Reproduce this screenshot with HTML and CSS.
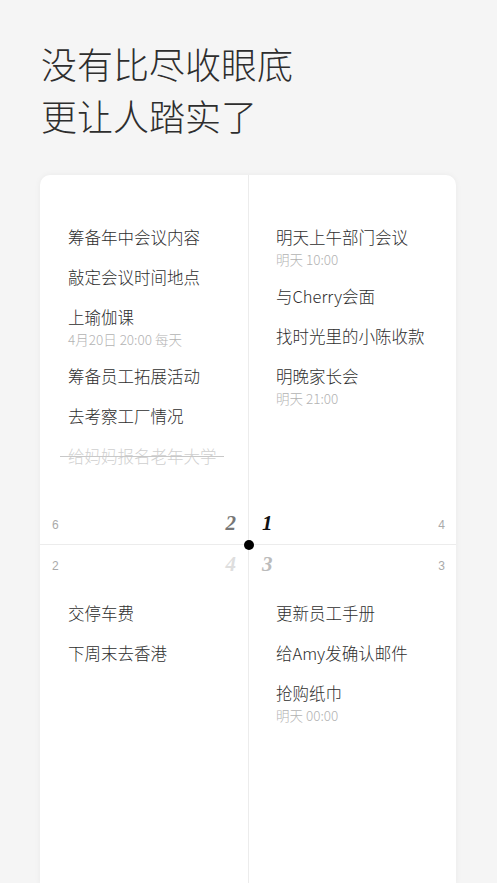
FILE: index.html
```html
<!DOCTYPE html>
<html lang="zh-CN">
<head>
<meta charset="utf-8">
<title>四象限</title>
<link rel="stylesheet" href="styles.css">
</head>
<body>
<header class="head">
  <h1 class="title">没有比尽收眼底<br>更让人踏实了</h1>
</header>
<section class="card">
  <div class="q q-top q-left">
    <ul class="items">
      <li class="item"><span class="name">筹备年中会议内容</span></li>
      <li class="item"><span class="name">敲定会议时间地点</span></li>
      <li class="item has-sub"><span class="name">上瑜伽课</span><span class="sub">4月20日 20:00 每天</span></li>
      <li class="item"><span class="name">筹备员工拓展活动</span></li>
      <li class="item"><span class="name">去考察工厂情况</span></li>
      <li class="item done"><span class="name">给妈妈报名老年大学</span></li>
    </ul>
    <div class="nums">
      <span class="count">6</span>
      <span class="big big-2">2</span>
    </div>
  </div>
  <div class="q q-top q-right">
    <ul class="items">
      <li class="item has-sub"><span class="name">明天上午部门会议</span><span class="sub">明天 10:00</span></li>
      <li class="item"><span class="name">与Cherry会面</span></li>
      <li class="item"><span class="name">找时光里的小陈收款</span></li>
      <li class="item has-sub"><span class="name">明晚家长会</span><span class="sub">明天 21:00</span></li>
    </ul>
    <div class="nums">
      <span class="big big-1">1</span>
      <span class="count">4</span>
    </div>
  </div>
  <div class="q q-bottom q-left">
    <div class="nums">
      <span class="count">2</span>
      <span class="big big-4">4</span>
    </div>
    <ul class="items">
      <li class="item"><span class="name">交停车费</span></li>
      <li class="item"><span class="name">下周末去香港</span></li>
    </ul>
  </div>
  <div class="q q-bottom q-right">
    <div class="nums">
      <span class="big big-3">3</span>
      <span class="count">3</span>
    </div>
    <ul class="items">
      <li class="item"><span class="name">更新员工手册</span></li>
      <li class="item"><span class="name">给Amy发确认邮件</span></li>
      <li class="item has-sub"><span class="name">抢购纸巾</span><span class="sub">明天 00:00</span></li>
    </ul>
  </div>
  <span class="dot"></span>
</section>
</body>
</html>
```

FILE: styles.css
```css
* { box-sizing: border-box; }
html, body { margin: 0; padding: 0; }
body {
  background: #f5f5f5;
  font-family: "Noto Sans CJK SC", "Noto Sans", sans-serif;
  color: #333;
  width: 497px;
  height: 883px;
  overflow: hidden;
}
.head { padding: 37px 0 0 41px; margin-bottom: 34px; }
.title {
  margin: 0;
  font-size: 36px;
  line-height: 52px;
  font-weight: 300;
  color: #2e2e2e;
  letter-spacing: 0;
}
.card {
  position: relative;
  margin: 0 41px 0 40px;
  background: #fff;
  border-radius: 10px 10px 0 0;
  box-shadow: 0 0 6px rgba(0, 0, 0, 0.05);
  display: grid;
  grid-template-columns: 209px 1fr;
}
.q { display: flex; flex-direction: column; }
.q-left { border-right: 1px solid #ececec; }
.q-top {
  height: 370px;
  border-bottom: 1px solid #ececec;
  justify-content: space-between;
  padding-top: 42px;
}
.q-bottom { height: 340px; padding-top: 7px; }
.items { list-style: none; margin: 0; padding: 0; }
.q-left .items { padding-left: 28px; }
.q-right .items { padding-left: 27px; }
.q-bottom .items { margin-top: 17px; }
.item {
  display: flex;
  flex-direction: column;
  align-items: flex-start;
  padding: 9px 0;
}
.item.has-sub { padding-bottom: 8px; }
.name {
  font-size: 16.5px;
  line-height: 22px;
  font-weight: 300;
  color: #2e2e2e;
  white-space: nowrap;
}
.sub {
  margin-top: 2px;
  font-size: 13.5px;
  line-height: 18px;
  font-weight: 300;
  color: #b3b3b3;
  white-space: nowrap;
}
.done .name {
  position: relative;
  color: #cfcfcf;
}
.done .name::after {
  content: "";
  position: absolute;
  left: -8px;
  right: -7px;
  top: 11px;
  height: 1px;
  background: #c8c8c8;
}
.nums {
  display: flex;
  justify-content: space-between;
  align-items: center;
  height: 24px;
}
.q-top .nums { margin-bottom: 9px; }
.q-left .nums { padding: 0 12px 0 12px; }
.q-right .nums { padding: 0 11px 0 13px; }
.count {
  font-family: "Liberation Sans", "Noto Sans", sans-serif;
  font-size: 12px;
  color: #aaa;
  margin-top: 3px;
}
.big {
  font-family: "Liberation Serif", "DejaVu Serif", serif;
  font-style: italic;
  font-weight: 700;
  font-size: 21px;
  line-height: 24px;
}
.big-2 { color: #777; }
.big-1 { color: #111; }
.big-4 { color: #dedede; }
.big-3 { color: #bbb; }
.dot {
  position: absolute;
  left: 204px;
  top: 365px;
  width: 10px;
  height: 10px;
  border-radius: 50%;
  background: #000;
}
```
